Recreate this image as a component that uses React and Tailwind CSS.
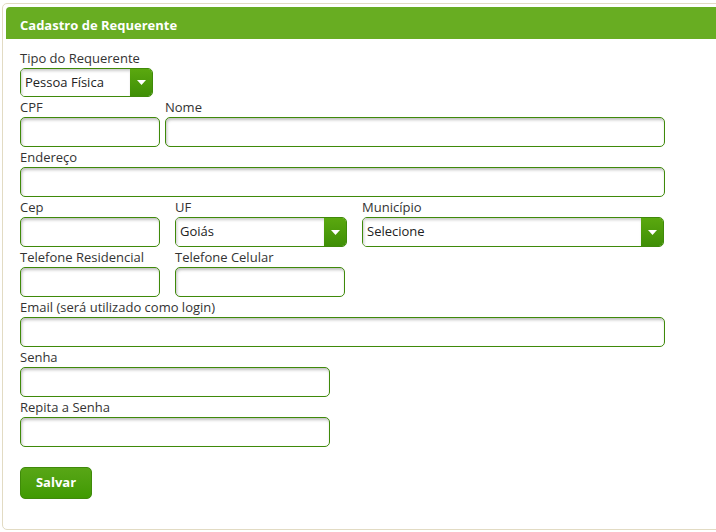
import { useState } from 'react'

const inputCls =
  'h-[30px] rounded-[5px] border border-[#3f8a0a] bg-white px-1 text-[13px] text-[#222] shadow-[inset_1px_2px_3px_rgba(0,0,0,0.25)] outline-none'

function Field({ label, width, children }) {
  return (
    <div className="flex flex-col" style={{ width }}>
      <label className="h-[20px] pt-[1px] text-[13px] leading-[18px] text-[#333]">{label}</label>
      {children}
    </div>
  )
}

function TextInput({ type = 'text' }) {
  return <input type={type} className={`${inputCls} w-full`} />
}

function SelectBox({ value, short }) {
  return (
    <div
      className={`flex w-full overflow-hidden rounded-[5px] border border-[#3f8a0a] shadow-[inset_1px_2px_3px_rgba(0,0,0,0.25)] ${
        short ? 'h-[29px]' : 'h-[30px]'
      }`}
    >
      <div className="flex flex-1 items-center bg-white pl-[4px] text-[13px] text-[#222] shadow-[inset_1px_2px_3px_rgba(0,0,0,0.2)]">
        {value}
      </div>
      <div className="flex w-[22px] items-center justify-center bg-gradient-to-b from-[#5aa80f] to-[#3f8f06]">
        <svg width="9" height="5" viewBox="0 0 9 5">
          <path d="M0 0 L9 0 L4.5 5 Z" fill="#fff" />
        </svg>
      </div>
    </div>
  )
}

export default function App() {
  const [tipo] = useState('Pessoa Física')

  return (
    <div
      className="h-[532px] w-[716px] overflow-hidden bg-white pl-[2px] pt-[3px]"
      style={{ fontFamily: '"Open Sans", "Noto Sans", sans-serif' }}
    >
      <div className="h-[527px] w-[730px] rounded-[5px] border border-[#e2dbc3] bg-white pl-[3px] pt-[3px]">
        {/* Header */}
        <div className="flex h-[32px] items-center rounded-tl-[4px] bg-[#68ad22] pl-[14px] pt-[6px] text-[13px] font-bold text-white">
          Cadastro de Requerente
        </div>

        {/* Form */}
        <div className="flex flex-col pl-[14px] pt-[9px]">
          <Field label="Tipo do Requerente" width={133}>
            <SelectBox value={tipo} short />
          </Field>

          <div className="flex gap-[5px]">
            <Field label="CPF" width={140}>
              <TextInput />
            </Field>
            <Field label="Nome" width={500}>
              <TextInput />
            </Field>
          </div>

          <Field label="Endereço" width={645}>
            <TextInput />
          </Field>

          <div className="flex">
            <Field label="Cep" width={140}>
              <TextInput />
            </Field>
            <div className="ml-[15px]">
              <Field label="UF" width={172}>
                <SelectBox value="Goiás" />
              </Field>
            </div>
            <div className="ml-[15px]">
              <Field label="Município" width={302}>
                <SelectBox value="Selecione" />
              </Field>
            </div>
          </div>

          <div className="flex">
            <Field label="Telefone Residencial" width={140}>
              <TextInput />
            </Field>
            <div className="ml-[15px]">
              <Field label="Telefone Celular" width={170}>
                <TextInput />
              </Field>
            </div>
          </div>

          <Field label="Email (será utilizado como login)" width={645}>
            <TextInput />
          </Field>

          <Field label="Senha" width={310}>
            <TextInput type="password" />
          </Field>

          <Field label="Repita a Senha" width={310}>
            <TextInput type="password" />
          </Field>

          <div className="pt-[20px]">
            <button
              type="button"
              className="h-[32px] w-[72px] rounded-[5px] border border-[#3f8a0a] bg-gradient-to-b from-[#58a616] to-[#409a02] text-[13px] font-bold text-white"
            >
              Salvar
            </button>
          </div>
        </div>
      </div>
    </div>
  )
}
